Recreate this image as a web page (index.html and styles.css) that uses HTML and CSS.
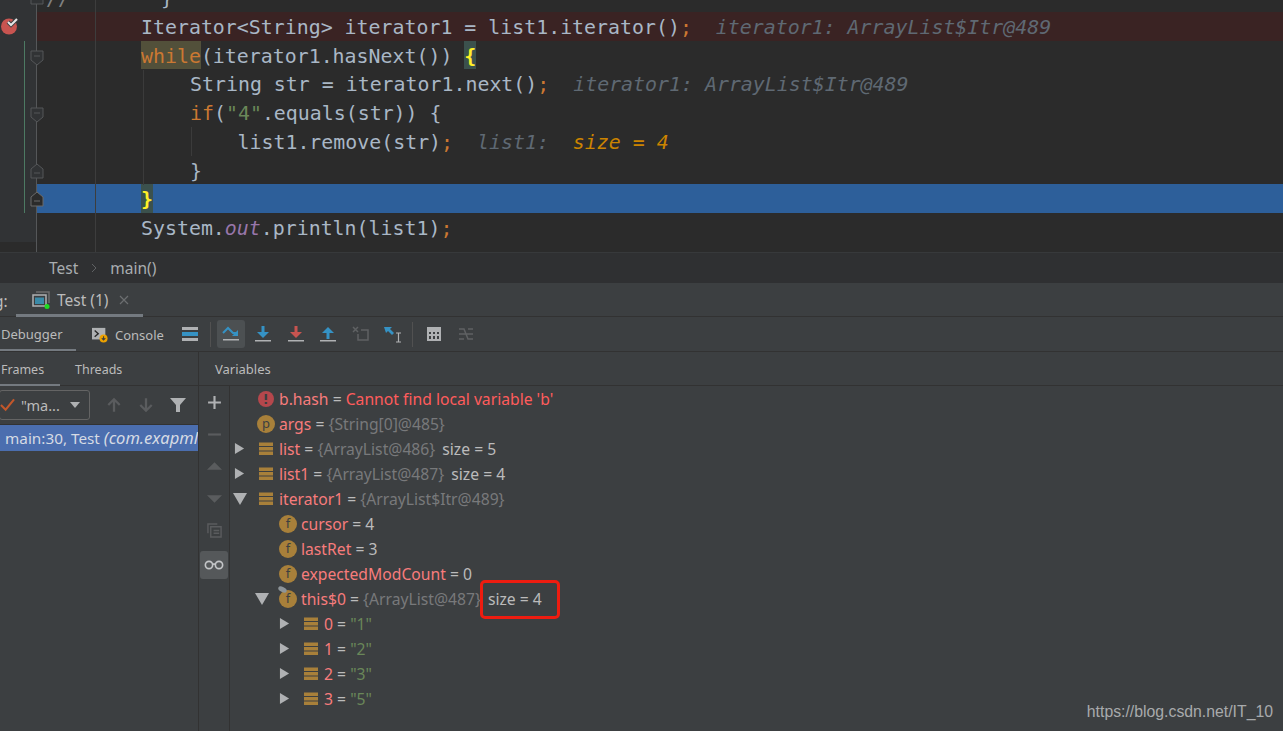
FILE: index.html
```html
<!DOCTYPE html>
<html lang="en">
  <head>
    <meta charset="UTF-8" />
    <title>Test - Debugger</title>
    <link rel="stylesheet" href="styles.css">
  </head>
  <body>
    <!-- Editor -->
    <div class="editor">
      <div class="margin-line"></div>
      <div class="change-bar"></div>
      <div class="gutter-line"></div>
      <div class="indent-guide guide-one"></div>
      <div class="indent-guide guide-two"></div>

      <div class="line line-first">
        <div class="gutter"><svg class="fold fold-box" viewBox="0 0 14 16"><path d="M1 1h12v14H1z" /></svg></div>
        <div class="code"><span class="pad8">//</span><span class="pad-close">}</span></div>
      </div>
      <div class="line line-break">
        <div class="gutter">
          <svg class="bp" viewBox="0 0 20 20">
            <circle cx="9" cy="10.500" r="8" fill="#c75450" />
            <path d="M8 6l3 3 6-6" fill="none" stroke="#3c3f41" stroke-width="4" />
            <path d="M8 6l3 3 6-6" fill="none" stroke="#e6e6e6" stroke-width="2" />
          </svg>
        </div>
        <div class="code code-main">Iterator&lt;String&gt; iterator1 = list1.iterator()<span class="semi">;</span><span class="hint">  iterator1: ArrayList$Itr@489</span></div>
      </div>
      <div class="line">
        <div class="gutter"><svg class="fold fold-down" viewBox="0 0 14 16"><path d="M1 1h12v9l-6 5-6-5zM4 6h6" /></svg></div>
        <div class="code code-main"><span class="kw-match">while</span>(iterator1.hasNext()) <span class="brace">{</span></div>
      </div>
      <div class="line">
        <div class="gutter"></div>
        <div class="code code-inner">String str = iterator1.next()<span class="semi">;</span><span class="hint">  iterator1: ArrayList$Itr@489</span></div>
      </div>
      <div class="line">
        <div class="gutter"><svg class="fold fold-down" viewBox="0 0 14 16"><path d="M1 1h12v9l-6 5-6-5zM4 6h6" /></svg></div>
        <div class="code code-inner"><span class="kw">if</span>(<span class="str">"4"</span>.equals(str)) {</div>
      </div>
      <div class="line">
        <div class="gutter"></div>
        <div class="code code-deep">list1.remove(str)<span class="semi">;</span><span class="hint">  list1:  </span><span class="hint-val">size = 4</span></div>
      </div>
      <div class="line">
        <div class="gutter"><svg class="fold fold-up" viewBox="0 0 14 16"><path d="M7 1l6 5v9H1V6zM4 10h6" /></svg></div>
        <div class="code code-inner">}</div>
      </div>
      <div class="line line-current">
        <div class="gutter"><svg class="fold fold-up fold-current" viewBox="0 0 14 16"><path d="M7 1l6 5v9H1V6zM4 10h6" /></svg></div>
        <div class="code code-main"><span class="brace">}</span></div>
      </div>
      <div class="line">
        <div class="gutter"></div>
        <div class="code code-main">System.<span class="field">out</span>.println(list1)<span class="semi">;</span></div>
      </div>
    </div>

    <!-- Breadcrumb -->
    <div class="crumbs">
      <span>Test</span>
      <svg class="crumb-sep" viewBox="0 0 6 10"><path d="M1 1l4 4-4 4" /></svg>
      <span>main()</span>
    </div>

    <!-- Tool window title -->
    <div class="tool-title">
      <span class="tool-name">g:</span>
      <div class="run-tab">
        <svg class="ico18" viewBox="0 0 18 18">
          <path d="M4 1h13v11" fill="none" stroke="#6e6e6e" stroke-width="1.500" />
          <rect x="1" y="4" width="13" height="11" fill="#3d3f41" stroke="#afb1b3" stroke-width="1.500" />
          <rect x="3" y="6.500" width="9" height="6.500" fill="#3b8aa8" />
          <circle cx="15" cy="15.500" r="2.500" fill="#1fdc1f" />
        </svg>
        <span>Test (1)</span>
        <svg class="tab-close" viewBox="0 0 10 10"><path d="M1 1l8 8M9 1l-8 8" /></svg>
      </div>
    </div>

    <!-- Debugger toolbar -->
    <div class="tool-bar">
      <div class="main-tab">Debugger</div>
      <div class="console-tab">
        <svg class="ico16" viewBox="0 0 18 18">
          <rect x="0" y="1" width="15" height="13" fill="#afb1b3" />
          <path d="M3 4l4 3.500-4 3.500" fill="none" stroke="#2b2b2b" stroke-width="1.600" />
          <circle cx="13" cy="13" r="4.500" fill="#eda200" />
          <path d="M13 10.500v4M11 12.500l2 2 2-2" fill="none" stroke="#3c3f41" stroke-width="1.200" />
        </svg>
        <span>Console</span>
      </div>
      <svg class="ico16 layout-ico" viewBox="0 0 16 14">
        <rect y="0" width="16" height="3" fill="#afb1b3" />
        <rect y="5" width="16" height="4" fill="#3592c4" />
        <rect y="11" width="16" height="3" fill="#afb1b3" />
      </svg>
      <div class="bar-sep"></div>
      <div class="step-btn step-active">
        <svg class="ico18" viewBox="0 0 18 18">
          <path d="M1 8l5-5 5 5 4 0" fill="none" stroke="#3592c4" stroke-width="2" />
          <path d="M16 5v6h-6z" fill="#3592c4" />
          <rect x="1" y="14" width="16" height="1.500" fill="#afb1b3" />
        </svg>
      </div>
      <div class="step-btn">
        <svg class="ico18" viewBox="0 0 18 18">
          <path d="M9 1v7" stroke="#3592c4" stroke-width="3" />
          <path d="M3 7h12l-6 6z" fill="#3592c4" />
          <rect x="1" y="15" width="16" height="1.500" fill="#afb1b3" />
        </svg>
      </div>
      <div class="step-btn">
        <svg class="ico18" viewBox="0 0 18 18">
          <path d="M9 1v7" stroke="#c75450" stroke-width="3" />
          <path d="M3 7h12l-6 6z" fill="#c75450" />
          <rect x="1" y="15" width="16" height="1.500" fill="#afb1b3" />
        </svg>
      </div>
      <div class="step-btn">
        <svg class="ico18" viewBox="0 0 18 18">
          <path d="M9 7v7" stroke="#3592c4" stroke-width="3" />
          <path d="M3 8h12L9 2z" fill="#3592c4" />
          <rect x="1" y="15" width="16" height="1.500" fill="#afb1b3" />
        </svg>
      </div>
      <div class="step-btn">
        <svg class="ico18" viewBox="0 0 18 18">
          <path d="M1 2l5 5M6 2l-5 5" stroke="#5f6163" stroke-width="1.500" />
          <path d="M9 5h7v10H6v-6" fill="none" stroke="#5f6163" stroke-width="1.500" />
        </svg>
      </div>
      <div class="step-btn">
        <svg class="ico18" viewBox="0 0 18 18">
          <path d="M0 2h8L6 4l4 4-2 2-4-4-2 2z" fill="#3592c4" />
          <path d="M12 8h5M14.500 8v9M12 17h5" fill="none" stroke="#afb1b3" stroke-width="1.200" />
        </svg>
      </div>
      <div class="bar-sep bar-sep-right"></div>
      <div class="step-btn">
        <svg class="ico18" viewBox="0 0 18 18">
          <path fill="#afb1b3" fill-rule="evenodd" d="M2 2h14v14H2zM4 7v2h2V7zM8 7v2h2V7zM12 7v2h2V7zM4 11v3h2v-3zM8 11v3h2v-3zM12 11v3h2v-3z" />
        </svg>
      </div>
      <div class="step-btn">
        <svg class="ico18" viewBox="0 0 18 18">
          <path d="M2 4h5l4 10h5M2 14h5M11 4h5M2 9h14" fill="none" stroke="#5f6163" stroke-width="1.500" />
        </svg>
      </div>
    </div>

    <div class="panels">
      <!-- Frames -->
      <div class="frames">
        <div class="sub-tabs">
          <div class="sub-tab sub-active">Frames</div>
          <div class="sub-tab">Threads</div>
        </div>
        <div class="frame-tools">
          <div class="thread-select">
            <svg class="check" viewBox="0 0 16 14"><path d="M1 7l5 5 9-11" /></svg>
            <span>"ma...</span>
            <svg class="caret" viewBox="0 0 10 6"><path d="M0 0h10L5 6z" /></svg>
          </div>
          <svg class="ico16 dim-arrow" viewBox="0 0 14 14"><path d="M7 13V2M2 7l5-5 5 5" /></svg>
          <svg class="ico16 dim-arrow" viewBox="0 0 14 14"><path d="M7 1v11M2 7l5 5 5-5" /></svg>
          <svg class="ico16 funnel" viewBox="0 0 16 16"><path d="M0 1h16l-6 7v7H6V8z" /></svg>
        </div>
        <div class="frame-row">main:30, Test <i>(com.exapmle)</i></div>
      </div>

      <!-- Variables -->
      <div class="vars">
        <div class="vars-head">Variables</div>
        <div class="vars-body">
          <div class="side-tools">
            <svg class="side-ico" viewBox="0 0 14 14"><path class="plus" d="M7 1v12M1 7h12" /></svg>
            <svg class="side-ico" viewBox="0 0 14 14"><path class="minus" d="M1 7h12" /></svg>
            <svg class="side-ico" viewBox="0 0 14 14"><path class="tri" d="M0 10l7-7 7 7z" /></svg>
            <svg class="side-ico" viewBox="0 0 14 14"><path class="tri" d="M0 4l7 7 7-7z" /></svg>
            <svg class="side-ico" viewBox="0 0 16 16"><path class="copy" d="M1 11V1h10M4 4h11v11H4zM7 8h6M7 11h6" /></svg>
            <div class="watch-btn">
              <svg class="glasses" viewBox="0 0 22 10"><circle cx="5.500" cy="5" r="4" /><circle cx="16.500" cy="5" r="4" /><path d="M9.500 4h3" /></svg>
            </div>
          </div>

          <ul class="tree">
            <li class="row">
              <svg class="badge badge-err" viewBox="0 0 18 18"><circle cx="9" cy="9" r="8" /><path d="M9 4v6M9 12v2" /></svg>
              <span class="name">b.hash</span><span class="eq"> = </span><span class="err">Cannot find local variable 'b'</span>
            </li>
            <li class="row">
              <span class="badge badge-letter">p</span>
              <span class="name">args</span><span class="eq"> = </span><span class="ref">{String[0]@485}</span>
            </li>
            <li class="row">
              <svg class="arrow" viewBox="0 0 12 12"><path d="M1 0l10 6-10 6z" /></svg>
              <svg class="badge" viewBox="0 0 18 18"><path class="stack" d="M2 2.500h14V6H2zM2 7h14v3.500H2zM2 11.500h14V15H2z" /></svg>
              <span class="name">list</span><span class="eq"> = </span><span class="ref">{ArrayList@486}</span><span class="size">size = 5</span>
            </li>
            <li class="row">
              <svg class="arrow" viewBox="0 0 12 12"><path d="M1 0l10 6-10 6z" /></svg>
              <svg class="badge" viewBox="0 0 18 18"><path class="stack" d="M2 2.500h14V6H2zM2 7h14v3.500H2zM2 11.500h14V15H2z" /></svg>
              <span class="name">list1</span><span class="eq"> = </span><span class="ref">{ArrayList@487}</span><span class="size">size = 4</span>
            </li>
            <li class="row">
              <svg class="arrow arrow-open" viewBox="0 0 14 12"><path d="M0 0h14L7 12z" /></svg>
              <svg class="badge" viewBox="0 0 18 18"><path class="stack" d="M2 2.500h14V6H2zM2 7h14v3.500H2zM2 11.500h14V15H2z" /></svg>
              <span class="name">iterator1</span><span class="eq"> = </span><span class="ref">{ArrayList$Itr@489}</span>
            </li>
            <li class="row depth1">
              <span class="badge badge-letter">f</span>
              <span class="name">cursor</span><span class="eq"> = 4</span>
            </li>
            <li class="row depth1">
              <span class="badge badge-letter">f</span>
              <span class="name">lastRet</span><span class="eq"> = 3</span>
            </li>
            <li class="row depth1">
              <span class="badge badge-letter">f</span>
              <span class="name">expectedModCount</span><span class="eq"> = 0</span>
            </li>
            <li class="row depth1">
              <svg class="arrow arrow-open" viewBox="0 0 14 12"><path d="M0 0h14L7 12z" /></svg>
              <span class="badge badge-letter badge-watch">f</span>
              <span class="name">this$0</span><span class="eq"> = </span><span class="ref">{ArrayList@487}</span>
              <span class="size boxed">size = 4</span>
            </li>
            <li class="row depth2">
              <svg class="arrow" viewBox="0 0 12 12"><path d="M1 0l10 6-10 6z" /></svg>
              <svg class="badge" viewBox="0 0 18 18"><path class="stack" d="M2 2.500h14V6H2zM2 7h14v3.500H2zM2 11.500h14V15H2z" /></svg>
              <span class="name">0</span><span class="eq"> = </span><span class="val-str">"1"</span>
            </li>
            <li class="row depth2">
              <svg class="arrow" viewBox="0 0 12 12"><path d="M1 0l10 6-10 6z" /></svg>
              <svg class="badge" viewBox="0 0 18 18"><path class="stack" d="M2 2.500h14V6H2zM2 7h14v3.500H2zM2 11.500h14V15H2z" /></svg>
              <span class="name">1</span><span class="eq"> = </span><span class="val-str">"2"</span>
            </li>
            <li class="row depth2">
              <svg class="arrow" viewBox="0 0 12 12"><path d="M1 0l10 6-10 6z" /></svg>
              <svg class="badge" viewBox="0 0 18 18"><path class="stack" d="M2 2.500h14V6H2zM2 7h14v3.500H2zM2 11.500h14V15H2z" /></svg>
              <span class="name">2</span><span class="eq"> = </span><span class="val-str">"3"</span>
            </li>
            <li class="row depth2">
              <svg class="arrow" viewBox="0 0 12 12"><path d="M1 0l10 6-10 6z" /></svg>
              <svg class="badge" viewBox="0 0 18 18"><path class="stack" d="M2 2.500h14V6H2zM2 7h14v3.500H2zM2 11.500h14V15H2z" /></svg>
              <span class="name">3</span><span class="eq"> = </span><span class="val-str">"5"</span>
            </li>
          </ul>
        </div>
      </div>
    </div>

    <div class="watermark">https://blog.csdn.net/IT_10</div>
  </body>
</html>
```

FILE: styles.css
```css
/* Page */
body {
  margin: 0;
  height: 731px;
  overflow: hidden;
  display: flex;
  flex-direction: column;
  background-color: #3c3f41;
  color: #bbbbbb;
  font-family: "Noto Sans", "Liberation Sans", sans-serif;
  font-size: 13px;
}

svg {
  flex: none;
  display: block;
}

.ico16 {
  width: 16px;
  height: 16px;
}

.ico18 {
  width: 18px;
  height: 18px;
}

/* Editor */
.editor {
  position: relative;
  height: 252px;
  flex: none;
  overflow: hidden;
  background-color: #2b2b2b;
  font-family: "DejaVu Sans Mono", monospace;
  font-size: 19.9px;
  color: #a9b7c6;
}

.line {
  display: flex;
  height: 28.7px;
  line-height: 32.7px; /* sits the text a little low in the row */
  white-space: pre;
}

.line-first {
  margin-top: -16.6px;
}

.gutter {
  width: 36px;
  flex: none;
  background-color: #313335;
  position: relative;
  z-index: 1;
}

.code {
  flex: 1;
  margin-left: 1px;
}

.code-main {
  padding-left: 104px;
}

.code-inner {
  padding-left: 153px;
}

.code-deep {
  padding-left: 200.5px;
}

.line-break .code {
  background-color: #3a2323;
}

.line-current .code {
  background-color: #2d5f9a;
}

.pad8 {
  padding-left: 9px;
  color: #808080;
}

.pad-close {
  padding-left: 91px;
}

.semi {
  color: #cc7832;
}

.kw {
  color: #cc7832;
}

.kw-match {
  color: #cc7832;
  background-color: #52503a;
  display: inline-block;
  height: 28.7px;
}

.brace {
  color: #ffef28;
  font-weight: bold;
  background-color: #3b514d;
  display: inline-block;
  height: 28.7px;
}

.str {
  color: #6a8759;
}

.field {
  color: #9876aa;
  font-style: italic;
}

.hint {
  color: #5f6973;
  font-style: italic;
}

.hint-val {
  color: #cc8400;
  font-style: italic;
}

.fold {
  position: absolute;
  left: 30px;
  width: 14px;
  height: 16px;
  fill: #313335;
  stroke: #555759;
  stroke-width: 1;
}

.fold-box {
  top: 6px;
}

.fold-down {
  top: 9px;
}

.fold-up {
  top: 7px;
}

.fold-current {
  fill: #2b2b2b;
  stroke: #6a6a6a;
}

.bp {
  position: absolute;
  left: 0;
  top: 3.5px;
  width: 20px;
  height: 20px;
}

.margin-line {
  position: absolute;
  left: 95px;
  top: 0;
  bottom: 0;
  width: 1px;
  background-color: #3d3d3d;
  z-index: 1;
}

.gutter-line {
  position: absolute;
  left: 36px;
  top: 0;
  bottom: 0;
  width: 1px;
  background-color: #555759;
}

.change-bar {
  position: absolute;
  left: 24px;
  top: 41px;
  height: 172px;
  width: 1px;
  background-color: #4d7a63;
  z-index: 2;
}

.indent-guide {
  position: absolute;
  width: 1px;
  background-color: #3b3b3b;
}

.guide-one {
  left: 143px;
  top: 70px;
  height: 115px;
}

.guide-two {
  left: 191px;
  top: 127px;
  height: 29px;
}

/* Breadcrumb */
.crumbs {
  height: 31px;
  flex: none;
  display: flex;
  align-items: center;
  gap: 13px;
  padding-left: 49px;
  box-sizing: border-box;
  background-color: #2f3032;
  border-top: 1px solid #37393b;
  color: #a9adb0;
  font-size: 15.5px;
}

.crumb-sep {
  width: 6px;
  height: 10px;
  fill: none;
  stroke: #5f6163;
}

/* Tool window title */
.tool-title {
  height: 34px;
  flex: none;
  display: flex;
  box-sizing: border-box;
  border-bottom: 1px solid #323232;
  font-size: 15.5px;
}

.tool-name {
  line-height: 36px;
  width: 16px;
  margin-left: -6px;
  margin-right: 6px;
}

.run-tab {
  display: flex;
  align-items: center;
  gap: 7px;
  padding: 2px 14px 0 16px;
  width: 127px;
  box-sizing: border-box;
  border-bottom: 3px solid #747a80;
  height: 34px;
}

.tab-close {
  width: 10px;
  height: 10px;
  margin-left: 3px;
  fill: none;
  stroke: #6c6e70;
  stroke-width: 1.200;
}

/* Debugger toolbar */
.tool-bar {
  height: 35px;
  flex: none;
  display: flex;
  align-items: center;
  box-sizing: border-box;
  border-bottom: 1px solid #323232;
}

.main-tab {
  width: 76px;
  height: 34px;
  line-height: 35px;
  box-sizing: border-box;
  border-bottom: 2px solid #747a80;
  padding-left: 1px;
  flex: none;
}

.console-tab {
  display: flex;
  align-items: center;
  gap: 7px;
  margin-left: 16px;
  padding-top: 1px;
}

.layout-ico {
  margin-left: 18px;
  height: 14px;
}

.bar-sep {
  width: 1px;
  height: 25px;
  background-color: #515151;
  margin: 0 6px 0 12px;
  flex: none;
}

.bar-sep-right {
  margin: 0 7px 0 0;
}

.step-btn {
  width: 28px;
  height: 28px;
  margin-right: 4.5px;
  flex: none;
  display: flex;
  align-items: center;
  justify-content: center;
  border-radius: 3px;
}

.step-active {
  background-color: #4c5052;
}

/* Panels */
.panels {
  flex: 1;
  display: flex;
  min-height: 0;
}

.frames {
  width: 198px;
  flex: none;
  border-right: 1px solid #323232;
}

.sub-tabs {
  height: 34px;
  display: flex;
  box-sizing: border-box;
  border-bottom: 1px solid #323232;
  font-size: 12.5px;
}

.sub-tab {
  line-height: 35px;
  padding: 0 15px;
}

.sub-active {
  width: 60px;
  box-sizing: border-box;
  padding: 0 1px;
  border-bottom: 2px solid #747a80;
  height: 34px;
}

.frame-tools {
  height: 39px;
  display: flex;
  align-items: center;
  gap: 16px;
  box-sizing: border-box;
  border-bottom: 1px solid #323232;
}

.thread-select {
  width: 91px;
  height: 30px;
  margin-left: -1px;
  box-sizing: border-box;
  border: 1px solid #646464;
  border-radius: 3px;
  display: flex;
  align-items: center;
  gap: 6px;
  flex: none;
  font-size: 14.5px;
}

.check {
  width: 15px;
  height: 14px;
  fill: none;
  stroke: #c2572b;
  stroke-width: 2.200;
}

.caret {
  width: 10px;
  height: 6px;
  fill: #afb1b3;
  margin-left: 4px;
}

.dim-arrow {
  width: 16px;
  height: 16px;
  fill: none;
  stroke: #5a5c5e;
  stroke-width: 2;
}

.funnel {
  fill: #afb1b3;
}

.frame-row {
  height: 26px;
  line-height: 26px;
  padding-left: 5px;
  background-color: #4b6eaf;
  color: #d6dbe4;
  white-space: nowrap;
  overflow: hidden;
  font-size: 15.3px;
}

.frame-row i {
  font-size: 16.5px;
}

/* Variables */
.vars {
  flex: 1;
  display: flex;
  flex-direction: column;
}

.vars-head {
  height: 34px;
  line-height: 35px;
  flex: none;
  padding-left: 16px;
  box-sizing: border-box;
  border-bottom: 1px solid #323232;
}

.vars-body {
  flex: 1;
  display: flex;
}

.side-tools {
  width: 31px;
  flex: none;
  box-sizing: border-box;
  border-right: 1px solid #323232;
  display: flex;
  flex-direction: column;
  align-items: center;
  padding-top: 9px;
  gap: 17px;
}

.side-ico {
  width: 15px;
  height: 15px;
}

.plus {
  fill: none;
  stroke: #afb1b3;
  stroke-width: 2;
}

.minus {
  fill: none;
  stroke: #5a5c5e;
  stroke-width: 2;
}

.tri {
  fill: #5a5c5e;
}

.copy {
  fill: none;
  stroke: #5a5c5e;
  stroke-width: 1.500;
}

.watch-btn {
  width: 28px;
  height: 28px;
  margin-top: -4px;
  background-color: #55585a;
  border-radius: 3px;
  display: flex;
  align-items: center;
  justify-content: center;
}

.glasses {
  width: 20px;
  height: 10px;
  fill: none;
  stroke: #c4c6c8;
  stroke-width: 1.800;
}

.tree {
  list-style: none;
  margin: 0;
  padding: 0;
  flex: 1;
}

.row {
  position: relative;
  height: 25px;
  display: flex;
  align-items: center;
  padding-left: 27px;
  white-space: pre;
  font-size: 15.7px;
}

.depth1 {
  padding-left: 49px;
}

.depth2 {
  padding-left: 72px;
}

.arrow {
  position: absolute;
  left: 4px;
  top: 7px;
  width: 11px;
  height: 11px;
  fill: #afb1b3;
}

.arrow-open {
  left: 3px;
  width: 14px;
  height: 12px;
}

.depth1 .arrow {
  left: 25px;
}

.depth2 .arrow {
  left: 49px;
}

.badge {
  width: 18px;
  height: 18px;
  margin-right: 4px;
  flex: none;
}

.badge-err circle {
  fill: #b5474c;
}

.badge-err path {
  fill: none;
  stroke: #3c3f41;
  stroke-width: 2.400;
}

.badge-letter {
  position: relative;
  box-sizing: border-box;
  border-radius: 50%;
  background-color: #a8803a;
  color: #3c3f41;
  font-size: 13px;
  line-height: 17px;
  text-align: center;
}

.badge-watch::before {
  content: "";
  position: absolute;
  left: -1px;
  top: -3px;
  width: 9px;
  height: 5px;
  border-radius: 50%;
  background-color: #8d9499;
  transform: rotate(25deg);
}

.stack {
  fill: #a8803a;
}

.name {
  color: #f77c7c;
}

.err {
  color: #ff5c5c;
}

.ref {
  color: #78797b;
}

.size {
  margin-left: 7px;
}

.val-str {
  color: #6a8759;
}

.boxed {
  position: relative;
}

.boxed::after {
  content: "";
  position: absolute;
  left: -8px;
  top: -8px;
  width: 80px;
  height: 39px;
  border: 3px solid #ee1c10;
  border-radius: 5px;
  box-sizing: border-box;
}

.watermark {
  position: absolute;
  right: 10px;
  bottom: 10px;
  font-family: "Liberation Sans", sans-serif;
  font-size: 15.8px;
  color: #a8aaac;
}
```
